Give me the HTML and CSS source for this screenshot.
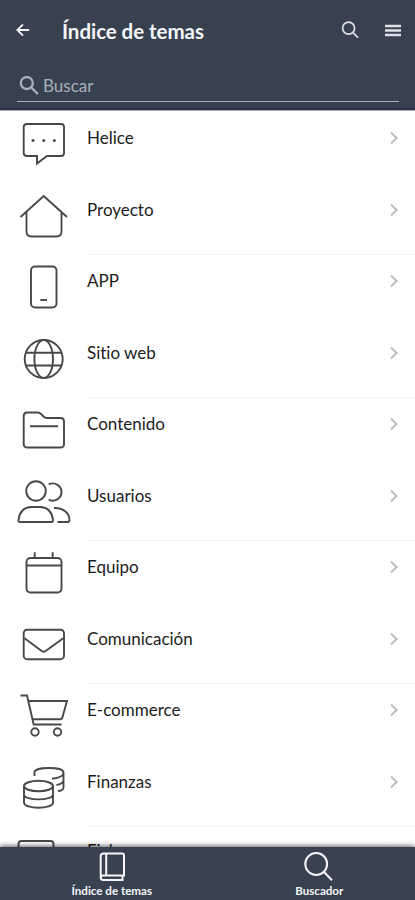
FILE: index.html
```html
<!DOCTYPE html>
<html lang="es">
<head>
<meta charset="utf-8">
<title>Índice de temas</title>
<link rel="stylesheet" href="styles.css">
</head>
<body>
<div class="app">
  <header class="header">
    <div class="toolbar">
      <svg class="back" viewBox="0 0 14 14"><path d="M13.2 7H1.5M7 1.3L1.3 7L7 12.7"/></svg>
      <h1 class="title">Índice de temas</h1>
      <svg class="find" viewBox="0 0 18 18"><circle cx="7.6" cy="7.2" r="6"/><path d="M12 11.6L17 16.6"/></svg>
      <svg class="menu" viewBox="0 0 16 13"><path d="M0 2H16M0 6.5H16M0 11H16"/></svg>
    </div>
    <div class="search">
      <svg class="search-icon" viewBox="0 0 20 20"><circle cx="7.8" cy="7" r="6"/><path d="M12.3 11.7L18.800 18"/></svg>
      <span>Buscar</span>
    </div>
  </header>
  <main class="list">
    <div class="row">
      <svg class="icon" viewBox="0 0 87 71"><path d="M27 13H61Q64 13 64 16V42Q64 45 61 45H47L37 52.5V45H27Q23.700 45 23.700 42V16Q23.700 13 27 13Z"/><g class="dots"><circle cx="33" cy="29.500" r="1.500"/><circle cx="43.700" cy="29.500" r="1.500"/><circle cx="54.300" cy="29.500" r="1.500"/></g></svg>
      <span class="label">Helice</span><svg class="chev" viewBox="0 0 10 14"><path d="M2 1.500L7.500 7L2 12.500"/></svg>
    </div>
    <div class="row">
      <svg class="icon" viewBox="0 0 87 71"><path d="M20.500 34L43.700 13L67 34M26.500 29V48.500Q26.500 53.500 31.500 53.500H56.500Q61.500 53.500 61.500 48.500V29"/></svg>
      <span class="label">Proyecto</span><svg class="chev" viewBox="0 0 10 14"><path d="M2 1.500L7.500 7L2 12.500"/></svg>
    </div>
    <div class="row">
      <svg class="icon" viewBox="0 0 87 71"><rect x="31" y="12.500" width="25.500" height="41" rx="4"/><path d="M40.300 46H47"/></svg>
      <span class="label">APP</span><svg class="chev" viewBox="0 0 10 14"><path d="M2 1.500L7.500 7L2 12.500"/></svg>
    </div>
    <div class="row">
      <svg class="icon" viewBox="0 0 87 71"><circle cx="43.700" cy="33" r="19"/><ellipse cx="43.700" cy="33" rx="9.300" ry="19"/><path d="M25.700 26.800H61.700M25.700 39.500H61.700"/></svg>
      <span class="label">Sitio web</span><svg class="chev" viewBox="0 0 10 14"><path d="M2 1.500L7.500 7L2 12.500"/></svg>
    </div>
    <div class="row">
      <svg class="icon" viewBox="0 0 87 71"><path d="M27 15.500H37.500Q39.500 15.500 41 17L43.500 19.500Q45 21 47 21H60.500Q64 21 64 24.500V47Q64 50.500 60.500 50.500H27.500Q23.700 50.500 23.700 47V19Q23.700 15.500 27 15.500ZM30 29.200H58"/></svg>
      <span class="label">Contenido</span><svg class="chev" viewBox="0 0 10 14"><path d="M2 1.500L7.500 7L2 12.500"/></svg>
    </div>
    <div class="row">
      <svg class="icon" viewBox="0 0 87 71"><circle cx="36" cy="22" r="9.800"/><path d="M20 53Q18.300 53 18.500 51Q20 38 32 38H39.500Q51.500 38 53 51Q53.200 53 51.500 53ZM48.700 15.300C55 12.500 61.500 17 61.500 23C61.500 29.500 54.500 33.500 48.700 30.700M54 39C63 38.500 69.500 44 69.500 51Q69.500 53 67.500 53H57.500"/></svg>
      <span class="label">Usuarios</span><svg class="chev" viewBox="0 0 10 14"><path d="M2 1.500L7.500 7L2 12.500"/></svg>
    </div>
    <div class="row">
      <svg class="icon" viewBox="0 0 87 71"><rect x="26.500" y="18" width="35" height="34.500" rx="4"/><path d="M26.500 25.500H61.500M34.700 12.300V18M52.700 12.300V18"/></svg>
      <span class="label">Equipo</span><svg class="chev" viewBox="0 0 10 14"><path d="M2 1.500L7.500 7L2 12.500"/></svg>
    </div>
    <div class="row">
      <svg class="icon" viewBox="0 0 87 71"><rect x="23.700" y="17.700" width="40.300" height="29.500" rx="3.500"/><path d="M24.500 26.200L41.700 39Q43.700 40.400 45.700 39L63.200 26.200"/></svg>
      <span class="label">Comunicación</span><svg class="chev" viewBox="0 0 10 14"><path d="M2 1.500L7.500 7L2 12.500"/></svg>
    </div>
    <div class="row">
      <svg class="icon" viewBox="0 0 87 71"><path d="M20.500 12.500H27L33.700 41.500H61.500M28.500 18H67L62.500 34Q62 36.200 60 36.200H32.500"/><circle cx="35" cy="49" r="3.700"/><circle cx="57.500" cy="49" r="3.700"/></svg>
      <span class="label">E-commerce</span><svg class="chev" viewBox="0 0 10 14"><path d="M2 1.500L7.500 7L2 12.500"/></svg>
    </div>
    <div class="row">
      <svg class="icon" viewBox="0 0 87 71"><ellipse cx="38.500" cy="31" rx="14.500" ry="5.300"/><path d="M24 31V47.500C24 54.500 53 54.500 53 47.500V31M24 39.500C24 46 53 46 53 39.500M34.500 21V17.500C34.500 11.500 63.500 11.500 63.500 17.500C63.500 21.500 57 23.300 52 23.700M63.500 17.500V32.500C63.500 34.500 61 35.700 58 36.300M63.500 25C63.500 28 60.500 29.300 56.500 30"/></svg>
      <span class="label">Finanzas</span><svg class="chev" viewBox="0 0 10 14"><path d="M2 1.500L7.500 7L2 12.500"/></svg>
    </div>
    <div class="row">
      <svg class="icon" viewBox="0 0 87 71"><rect x="18.500" y="15" width="35" height="36" rx="3"/></svg>
      <span class="label">Fichas</span><svg class="chev" viewBox="0 0 10 14"><path d="M2 1.500L7.500 7L2 12.500"/></svg>
    </div>
  </main>
  <nav class="tabs">
    <div class="tab">
      <svg class="tab-icon" viewBox="0 0 30 32"><path d="M6.500 2.500H25Q27 2.500 27 4.500V24.500H6.500Q3.700 24.500 3.700 26.500Q3.700 29 6.500 29H26.500M3.700 26.500V5Q3.700 2.500 6.500 2.500M9.200 2.500V24.500M25.500 24.500V29"/></svg>
      <span>Índice de temas</span>
    </div>
    <div class="tab">
      <svg class="tab-icon" viewBox="0 0 30 32"><circle cx="12.200" cy="13" r="10.900"/><path d="M20 21L28 29.200"/></svg>
      <span>Buscador</span>
    </div>
  </nav>
</div>
</body>
</html>
```
FILE: styles.css
```css
* { box-sizing: border-box; }

body {
  margin: 0;
  font-family: Lato, "Liberation Sans", sans-serif;
  font-variant-ligatures: none;
  background: #fff;
}

svg {
  display: block;
  flex: none;
  fill: none;
  stroke: currentColor;
}

.app {
  display: flex;
  flex-direction: column;
  height: 900px;
  overflow: hidden;
}

.header {
  flex: none;
  height: 111px;
  background: #38414f;
  border-bottom: 1px solid #aab2b8;
  box-shadow: inset 0 -2px 0 #2b3549;
  color: #f4f6fa;
}

.toolbar {
  display: flex;
  align-items: center;
  height: 60px;
  padding: 0 14px 0 16px;
}

.back {
  width: 14px;
  height: 14px;
  stroke-width: 1.8;
}

.title {
  flex: 1;
  margin: 2px 0 0 32px;
  font-size: 20.5px;
  font-weight: 700;
  letter-spacing: -0.05px;
  line-height: 28px;
  white-space: nowrap;
}

.find {
  width: 18px;
  height: 18px;
  margin-right: 26px;
  stroke-width: 1.7;
  color: #dce0e7;
}

.menu {
  width: 16px;
  height: 13px;
  stroke-width: 2.4;
  color: #dce0e7;
}

.search {
  display: flex;
  align-items: center;
  gap: 4px;
  height: 32px;
  margin: 10px 16px 0 17px;
  padding-left: 2px;
  border-bottom: 1px solid #a9b0b9;
  color: #a9b0bc;
  font-size: 17px;
}

.search-icon {
  width: 20px;
  height: 20px;
  stroke-width: 2.3;
}

.list {
  flex: 1;
  min-height: 0;
  overflow: hidden;
}

.row {
  display: grid;
  grid-template-columns: 87px 1fr 10px;
  height: 71.5px;
  padding-right: 16px;
  color: #1c1c1c;
}

.row:nth-child(odd):not(:first-child) {
  background: linear-gradient(#f3f3f3, #f3f3f3) 88px 0 / 100% 1px no-repeat;
}

.icon {
  width: 87px;
  height: 71px;
  color: #484848;
  stroke-width: 1.9;
}

.dots {
  fill: currentColor;
  stroke: none;
}

.label {
  margin-top: 16.4px;
  font-size: 17px;
  line-height: 22px;
}

.row:last-child .label {
  margin-top: 14px;
}

.chev {
  width: 10px;
  height: 14px;
  margin-top: 20.4px;
  color: #bdbdbd;
  stroke-width: 2.1;
}

.tabs {
  position: relative;
  flex: none;
  display: grid;
  grid-template-columns: 207.5px 207.5px;
  height: 53px;
  padding-left: 8px;
  background: #38414f;
  box-shadow: 0 -1px 5px rgba(0, 0, 0, 0.65);
  color: #f4f6fa;
}

.tab {
  display: flex;
  flex-direction: column;
  align-items: center;
  padding-top: 4px;
  font-size: 11.6px;
  font-weight: 700;
  line-height: 14px;
}

.tab-icon {
  width: 30px;
  height: 32px;
  margin-bottom: 1px;
  stroke-width: 2;
}
```
